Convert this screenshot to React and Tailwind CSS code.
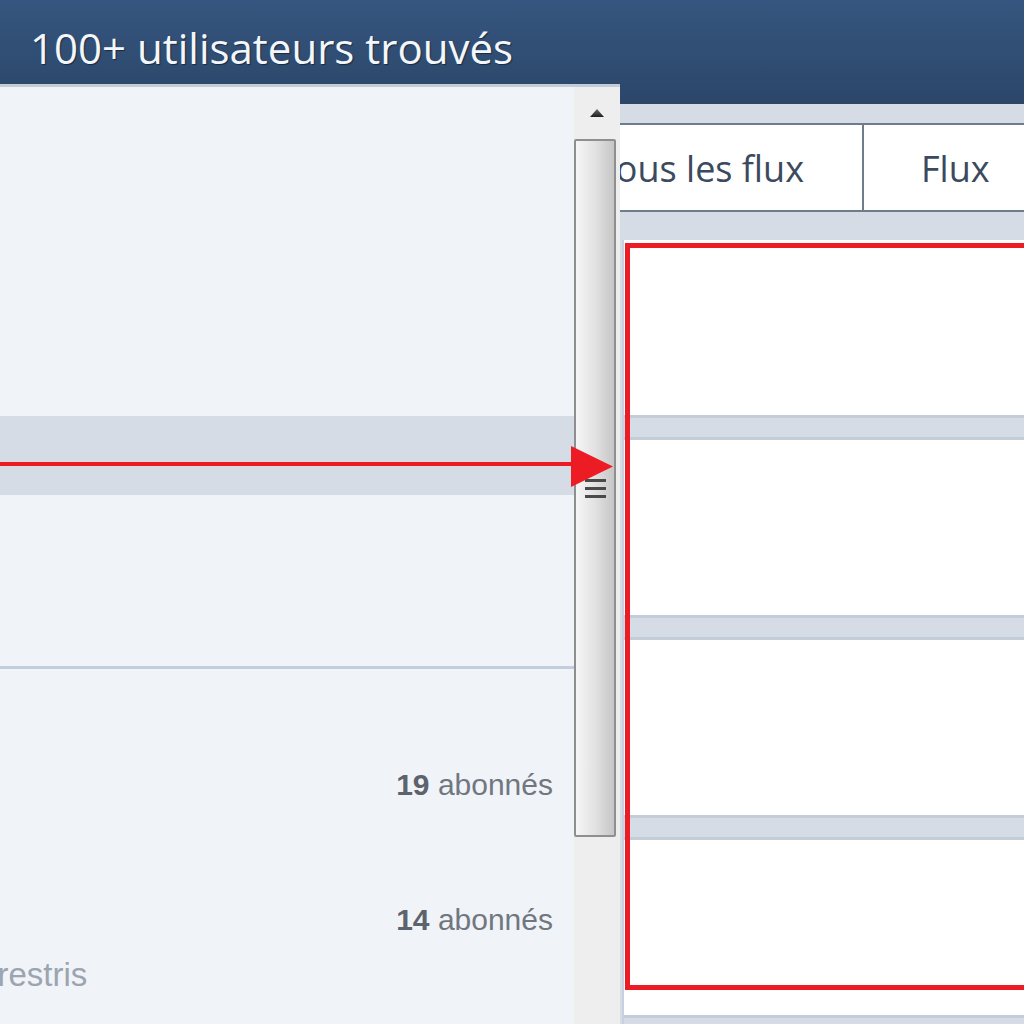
import React from "react";

const cards = [0, 1, 2, 3];

const Scrollbar = () => (
  <div className="w-[46px] flex flex-col bg-[#eeeeee]">
    <div className="h-[52px] flex items-center justify-center">
      <svg width="14" height="8" viewBox="0 0 14 8">
        <defs>
          <linearGradient id="up" x1="0" y1="0" x2="0" y2="1">
            <stop offset="0" stopColor="#6b6b6b" />
            <stop offset="1" stopColor="#1f1f1f" />
          </linearGradient>
        </defs>
        <polygon points="7,0 14,8 0,8" fill="url(#up)" />
      </svg>
    </div>
    <div className="mr-[4px] h-[698px] rounded-[2px] border-2 border-[#8f8f8f] bg-gradient-to-r from-[#f6f6f6] via-[#e2e2e2] to-[#c6c6c6] flex flex-col items-center justify-center gap-[5px]">
      <div className="w-[21px] h-[3px] bg-[#4a4a4a]" />
      <div className="w-[21px] h-[3px] bg-[#4a4a4a]" />
      <div className="w-[21px] h-[3px] bg-[#4a4a4a]" />
    </div>
  </div>
);

const UserList = () => (
  <div className="w-[574px] flex flex-col bg-[#f0f4f9] overflow-hidden font-['Liberation_Sans',Arial,sans-serif] text-[30px]">
    <div className="mt-[329px] h-[79px] bg-[#d5dce6]" />
    <div className="mt-[171px] h-[3px] bg-[#c3cedc]" />
    <div className="mt-[99px] h-[34px] leading-[34px] text-right pr-[21px] text-[#70777f]">
      <span className="font-bold text-[#5c636c]">19</span> abonnés
    </div>
    <div className="mt-[101px] h-[34px] leading-[34px] text-right pr-[21px] text-[#70777f]">
      <span className="font-bold text-[#5c636c]">14</span> abonnés
    </div>
    <div className="mt-[21px] h-[34px] leading-[34px] -ml-[41px] whitespace-nowrap text-[33px] text-[#9ba4af]">
      terrestris
    </div>
  </div>
);

const Feed = () => (
  <div className="mt-[20px] w-[404px] flex flex-col bg-[#d5dce6] font-['Open_Sans',sans-serif]">
    <div className="h-[19px]" />
    <div className="h-[89px] flex border-y-2 border-[#6e7c8c] bg-white text-[36px] leading-none text-[#3b4a5e]">
      <div className="w-[244px] shrink-0 border-r-2 border-[#6e7c8c] overflow-hidden flex items-center justify-end pr-[58px] pt-[3px] whitespace-nowrap">
        Tous les flux
      </div>
      <div className="flex-1 flex items-center pl-[57px] pt-[3px]">Flux</div>
    </div>
    <div className="h-[28px]" />
    <div className="ml-[2px] border-l-2 border-[#c8d2de] flex flex-col">
      {cards.map((c) => (
        <div key={c}>
          <div className="h-[175px] bg-white" />
          <div className="h-[25px] border-y-[3px] border-[#c3ccd9] bg-[#d5dce6]" />
        </div>
      ))}
    </div>
  </div>
);

export default function App() {
  return (
    <div className="relative w-[1024px] h-[1024px] overflow-hidden bg-[#d5dce6]">
      <div className="h-[104px] bg-gradient-to-b from-[#36567f] to-[#2b4669] pl-[30px] pt-[27px]">
        <h1 className="font-['Open_Sans',sans-serif] text-[42px] leading-none text-[#f3f6fa] [text-shadow:1px_1px_1px_rgba(0,0,0,0.45)]">
          100+ utilisateurs trouvés
        </h1>
      </div>

      <div className="-mt-[20px] flex items-start">
        <div className="relative z-10 w-[620px] h-[940px] flex border-t-[3px] border-[#c3ccd8]">
          <UserList />
          <Scrollbar />
        </div>
        <Feed />
      </div>

      {/* annotation overlay */}
      <div className="absolute left-[625px] top-[243px] w-[420px] h-[747px] border-[5px] border-[#ed1c24] z-20" />
      <div className="absolute left-0 top-[462px] w-[574px] h-[4px] bg-[#ed1c24] z-20" />
      <svg className="absolute left-[571px] top-[446px] z-20" width="42" height="41" viewBox="0 0 42 41">
        <polygon points="0,0 42,20.5 0,41" fill="#ed1c24" />
      </svg>
    </div>
  );
}
